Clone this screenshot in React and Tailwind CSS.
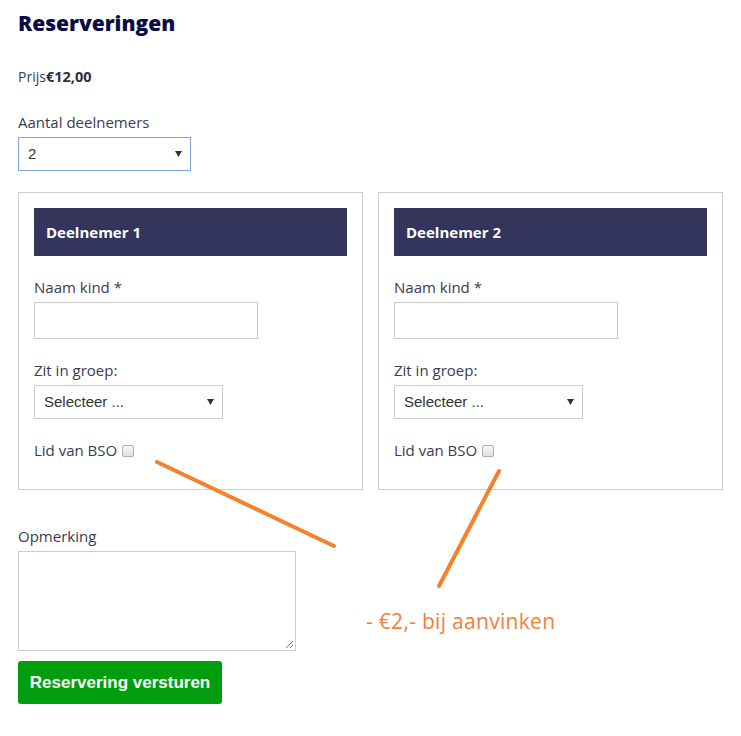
import React from 'react';

const FakeSelect = ({ value, className }) => (
  <div className={`flex items-center justify-between bg-white pl-[9px] pr-[8px] text-[15px] text-[#333] ${className}`} style={{ fontFamily: '"Liberation Sans", Arial, sans-serif' }}>
    <span>{value}</span>
    <svg width="7" height="6" viewBox="0 0 7 6">
      <path d="M0 0h7L3.5 6z" fill="#333" />
    </svg>
  </div>
);

const Checkbox = () => (
  <span className="ml-[5px] inline-block h-[12px] w-[12px] rounded-[2px] border border-[#b0b0b0] bg-gradient-to-b from-[#f6f6f6] to-[#e0e0e0] align-[-1px]" />
);

const Participant = ({ n }) => (
  <div className="border border-[#cccccc] p-[15px] pb-[29px]">
    <div className="flex h-[48px] items-center bg-[#33355d] px-[12px] text-[15px] font-bold text-white">
      Deelnemer {n}
    </div>
    <div className="mt-[21px] leading-[20px]">Naam kind *</div>
    <div className="mt-[5px] h-[37px] w-[224px] border border-[#cccccc] bg-white" />
    <div className="mt-[21px] leading-[20px]">Zit in groep:</div>
    <FakeSelect value="Selecteer ..." className="mt-[5px] h-[34px] w-[189px] border border-[#cccccc]" />
    <div className="mt-[21px] leading-[20px]">
      Lid van BSO
      <Checkbox />
    </div>
  </div>
);

export default function App() {
  return (
    <div className="relative min-h-[736px] w-[741px] bg-white px-[18px] text-[15px] text-[#3b3b4f]" style={{ fontFamily: '"Open Sans", sans-serif' }}>
      <h1 className="pt-[10px] text-[21px] font-extrabold leading-[26px] text-[#0b0b45]">Reserveringen</h1>

      <div className="mt-[31px] h-[20px] text-[14px] leading-[20px]">
        Prijs<span className="text-[14.5px] font-bold leading-none text-[#2e2e45]">€12,00</span>
      </div>

      <div className="mt-[25px] leading-[20px]">Aantal deelnemers</div>
      <FakeSelect value="2" className="mt-[5px] h-[34px] w-[173px] border border-[#7ea6dc]" />

      <div className="mt-[21px] grid grid-cols-[345px_345px] gap-[15px]">
        <Participant n={1} />
        <Participant n={2} />
      </div>

      <div className="mt-[36px] leading-[20px]">Opmerking</div>
      <div className="relative mt-[5px] h-[100px] w-[278px] border border-[#cccccc] bg-white">
        <svg className="absolute bottom-[1px] right-[1px]" width="9" height="9" viewBox="0 0 9 9">
          <path d="M8 1L1 8M8 5L5 8" stroke="#777" strokeWidth="1" />
        </svg>
      </div>
      <button
        className="mt-[10px] h-[43px] w-[204px] rounded-[3px] bg-[#009e0f] text-[17px] font-bold text-white"
        style={{ fontFamily: '"Liberation Sans", Arial, sans-serif' }}
      >
        Reservering versturen
      </button>

      {/* annotation overlay */}
      <svg className="pointer-events-none absolute left-0 top-0" width="741" height="736">
        <line x1="157" y1="462" x2="334" y2="546" stroke="#f5822a" strokeWidth="4" strokeLinecap="round" />
        <line x1="499" y1="471" x2="439" y2="586" stroke="#f5822a" strokeWidth="4" strokeLinecap="round" />
      </svg>
      <div className="absolute left-[366px] top-[607px] text-[21px] leading-[28px] tracking-[0.3px] text-[#f0813a]" style={{ fontFamily: '"Open Sans", sans-serif' }}>
        - €2,- bij aanvinken
      </div>
    </div>
  );
}
